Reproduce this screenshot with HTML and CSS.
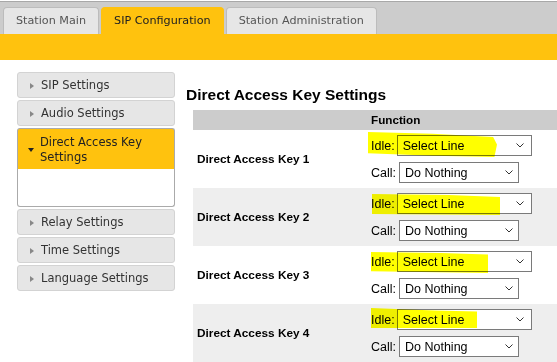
FILE: index.html
```html
<!DOCTYPE html>
<html>
<head>
<meta charset="utf-8">
<link rel="stylesheet" href="styles.css">
</head>
<body>
<div class="tabbar">
  <div class="tab">Station Main</div>
  <div class="tab active">SIP Configuration</div>
  <div class="tab">Station Administration</div>
</div>
<div class="band"></div>
<div class="main">
  <nav class="sidebar">
    <div class="acc-item"><span class="tri-r"></span>SIP Settings</div>
    <div class="acc-item"><span class="tri-r"></span>Audio Settings</div>
    <div class="acc-open">
      <div class="acc-head"><span class="tri-d"></span><span class="head-text">Direct Access Key Settings</span></div>
      <div class="acc-panel"></div>
    </div>
    <div class="acc-item"><span class="tri-r"></span>Relay Settings</div>
    <div class="acc-item"><span class="tri-r"></span>Time Settings</div>
    <div class="acc-item"><span class="tri-r"></span>Language Settings</div>
  </nav>
  <section class="content">
    <h2 class="title">Direct Access Key Settings</h2>
    <table class="keys">
      <tr class="hdr"><th class="c-key"></th><th class="c-fn">Function</th></tr>
      <tr class="r-white">
        <td class="c-key">Direct Access Key 1</td>
        <td class="c-fn"><div class="fn">
          <div class="mark m1"></div>
          <div class="line"><span class="lbl">Idle:</span><div class="sel sel-idle"><span>Select Line</span><svg width="8" height="5" viewBox="0 0 8 5"><polyline points="0.5,0.5 4,4 7.5,0.5" fill="none" stroke="#333" stroke-width="1"/></svg></div></div>
          <div class="line"><span class="lbl">Call:</span><div class="sel sel-call"><span>Do Nothing</span><svg width="8" height="5" viewBox="0 0 8 5"><polyline points="0.5,0.5 4,4 7.5,0.5" fill="none" stroke="#333" stroke-width="1"/></svg></div></div>
        </div></td>
      </tr>
      <tr class="r-grey">
        <td class="c-key">Direct Access Key 2</td>
        <td class="c-fn"><div class="fn">
          <div class="mark m2"></div>
          <div class="line"><span class="lbl">Idle:</span><div class="sel sel-idle"><span>Select Line</span><svg width="8" height="5" viewBox="0 0 8 5"><polyline points="0.5,0.5 4,4 7.5,0.5" fill="none" stroke="#333" stroke-width="1"/></svg></div></div>
          <div class="line"><span class="lbl">Call:</span><div class="sel sel-call"><span>Do Nothing</span><svg width="8" height="5" viewBox="0 0 8 5"><polyline points="0.5,0.5 4,4 7.5,0.5" fill="none" stroke="#333" stroke-width="1"/></svg></div></div>
        </div></td>
      </tr>
      <tr class="r-white">
        <td class="c-key">Direct Access Key 3</td>
        <td class="c-fn"><div class="fn">
          <div class="mark m3"></div>
          <div class="line"><span class="lbl">Idle:</span><div class="sel sel-idle"><span>Select Line</span><svg width="8" height="5" viewBox="0 0 8 5"><polyline points="0.5,0.5 4,4 7.5,0.5" fill="none" stroke="#333" stroke-width="1"/></svg></div></div>
          <div class="line"><span class="lbl">Call:</span><div class="sel sel-call"><span>Do Nothing</span><svg width="8" height="5" viewBox="0 0 8 5"><polyline points="0.5,0.5 4,4 7.5,0.5" fill="none" stroke="#333" stroke-width="1"/></svg></div></div>
        </div></td>
      </tr>
      <tr class="r-grey">
        <td class="c-key">Direct Access Key 4</td>
        <td class="c-fn"><div class="fn">
          <div class="mark m4"></div>
          <div class="line"><span class="lbl">Idle:</span><div class="sel sel-idle"><span>Select Line</span><svg width="8" height="5" viewBox="0 0 8 5"><polyline points="0.5,0.5 4,4 7.5,0.5" fill="none" stroke="#333" stroke-width="1"/></svg></div></div>
          <div class="line"><span class="lbl">Call:</span><div class="sel sel-call"><span>Do Nothing</span><svg width="8" height="5" viewBox="0 0 8 5"><polyline points="0.5,0.5 4,4 7.5,0.5" fill="none" stroke="#333" stroke-width="1"/></svg></div></div>
        </div></td>
      </tr>
    </table>
  </section>
</div>
</body>
</html>
```
FILE: styles.css
```css
html, body {
  margin: 0;
  padding: 0;
  background: #fff;
  overflow: hidden;
}
body {
  font-family: "DejaVu Sans", Verdana, sans-serif;
  width: 557px;
  height: 362px;
}

.tabbar {
  margin-top: 1px;
  border-top: 1px solid #a8a8a8;
  background: #cccccc;
  padding: 5px 0 0 3px;
  display: flex;
  gap: 2px;
}
.tab {
  height: 26px;
  line-height: 26px;
  padding: 0 12px;
  font-size: 11.2px;
  color: #555;
  background: #e6e6e6;
  border: 1px solid #bcbcbc;
  border-bottom: none;
  border-radius: 4px 4px 0 0;
}
.tab.active {
  background: #ffc20e;
  border-color: #ffc20e;
  color: #222;
}
.band {
  height: 26px;
  background: #ffc20e;
}

.main {
  display: flex;
  gap: 11px;
  padding: 12px 0 0 17px;
}
.sidebar {
  width: 158px;
  flex: none;
  display: flex;
  flex-direction: column;
  gap: 2px;
  font-size: 11.5px;
  color: #333;
}
.acc-item {
  height: 24px;
  line-height: 24px;
  background: #e6e6e6;
  border: 1px solid #d3d3d3;
  border-radius: 3px;
  display: flex;
  align-items: center;
}
.tri-r {
  width: 0;
  height: 0;
  border-left: 4px solid #888;
  border-top: 3.5px solid transparent;
  border-bottom: 3.5px solid transparent;
  margin: 1px 7px 0 12px;
}
.acc-open {
  display: flex;
  flex-direction: column;
}
.acc-head {
  background: #ffc20e;
  border: 1px solid #aaa;
  border-bottom: none;
  border-radius: 3px 3px 0 0;
  padding: 6px 8px 4px 0;
  display: flex;
  align-items: center;
  line-height: 15px;
  color: #222;
}
.tri-d {
  flex: none;
  width: 0;
  height: 0;
  border-top: 4px solid #222;
  border-left: 3.5px solid transparent;
  border-right: 3.5px solid transparent;
  margin: 0 6px 0 10px;
}
.head-text {
  width: 115px;
}
.acc-panel {
  height: 37px;
  background: #fff;
  border: 1px solid #aaa;
  border-top: none;
  border-radius: 0 0 3px 3px;
}

.content {
  flex: 1;
  overflow: hidden;
  font-family: "Liberation Sans", Arial, sans-serif;
}
.title {
  margin: 14px 0 6px;
  font-size: 15.5px;
  line-height: 18px;
  font-weight: bold;
  color: #000;
}
.keys {
  margin-left: 7px;
  width: 400px;
  border-collapse: collapse;
  border-spacing: 0;
  table-layout: fixed;
}
.keys td, .keys th {
  padding: 0;
}
.hdr {
  background: #cccccc;
  height: 20px;
}
.hdr th {
  font-size: 11.7px;
  font-weight: bold;
  text-align: left;
  line-height: 20px;
  color: #000;
}
.hdr .c-fn {
  padding-left: 3px;
}
.keys .c-key {
  width: 171px;
  padding-left: 4px;
}
td.c-key {
  font-size: 11.8px;
  font-weight: bold;
  vertical-align: middle;
  color: #000;
}
.r-white { background: #fff; }
.r-grey { background: #eeeeee; }

.fn {
  position: relative;
  height: 58px;
  box-sizing: border-box;
  padding: 5px 0 0 3px;
  display: flex;
  flex-direction: column;
  gap: 6px;
  font-size: 12.5px;
  color: #000;
}
.line {
  display: flex;
  align-items: center;
  gap: 2px;
}
.sel {
  height: 21px;
  box-sizing: border-box;
  border: 1px solid #7a7a7a;
  background: #fff;
  display: flex;
  align-items: center;
  justify-content: space-between;
  padding: 0 7px 0 5px;
}
.sel-idle { width: 135px; }
.sel-call { width: 120px; margin-left: 1px; padding-right: 5px; }

.mark {
  position: absolute;
  background: #ffff00;
  mix-blend-mode: multiply;
  pointer-events: none;
}
.m1 {
  left: 0; top: 1px; width: 129px; height: 27px;
  clip-path: polygon(0 4%, 50% 10%, 97% 22%, 100% 50%, 98% 96%, 50% 92%, 0 82%);
}
.m2 {
  left: 4px; top: 6px; width: 128px; height: 21px;
  clip-path: polygon(0 0, 60% 5%, 100% 14%, 100% 100%, 0 95%);
}
.m3 {
  left: 3px; top: 6px; width: 117px; height: 21px;
  clip-path: polygon(0 0, 60% 5%, 100% 12%, 100% 100%, 0 92%);
}
.m4 {
  left: 3px; top: 4px; width: 106px; height: 20px;
  clip-path: polygon(0 0, 60% 12%, 100% 18%, 100% 100%, 0 100%);
}
```
